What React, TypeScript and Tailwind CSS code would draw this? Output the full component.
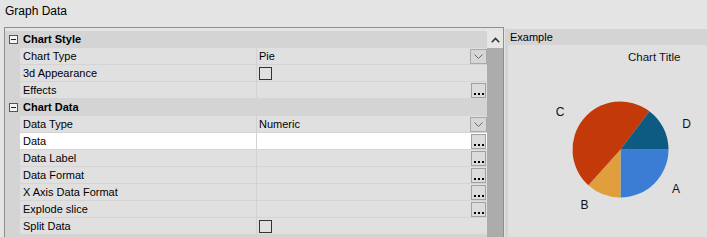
import React from 'react';

type Row = {
  label: string;
  cat?: boolean;
  value?: string;
  kind?: 'dropdown' | 'check' | 'ellipsis';
  selected?: boolean;
};

const rows: Row[] = [
  { label: 'Chart Style', cat: true },
  { label: 'Chart Type', value: 'Pie', kind: 'dropdown' },
  { label: '3d Appearance', kind: 'check' },
  { label: 'Effects', kind: 'ellipsis' },
  { label: 'Chart Data', cat: true },
  { label: 'Data Type', value: 'Numeric', kind: 'dropdown' },
  { label: 'Data', kind: 'ellipsis', selected: true },
  { label: 'Data Label', kind: 'ellipsis' },
  { label: 'Data Format', kind: 'ellipsis' },
  { label: 'X Axis Data Format', kind: 'ellipsis' },
  { label: 'Explode slice', kind: 'ellipsis' },
  { label: 'Split Data', kind: 'check' },
];

const slices = [
  { name: 'A', from: 0, to: 90, color: '#3b7dd5' },
  { name: 'B', from: 90, to: 132, color: '#e09e3c' },
  { name: 'C', from: 132, to: 307, color: '#c3390a' },
  { name: 'D', from: 307, to: 360, color: '#0d5a82' },
];

const cx = 112.5;
const cy = 104.5;
const r = 48;

const arc = (from: number, to: number) => {
  const a1 = (from * Math.PI) / 180;
  const a2 = (to * Math.PI) / 180;
  const x1 = cx + r * Math.cos(a1);
  const y1 = cy + r * Math.sin(a1);
  const x2 = cx + r * Math.cos(a2);
  const y2 = cy + r * Math.sin(a2);
  const large = to - from > 180 ? 1 : 0;
  return `M${cx} ${cy} L${x1} ${y1} A${r} ${r} 0 ${large} 1 ${x2} ${y2} Z`;
};

const Minus = () => (
  <div className="w-[9px] h-[9px] border border-[#555] bg-[#f2f2f2] flex items-center justify-center">
    <div className="w-[5px] h-[1px] bg-[#222]" />
  </div>
);

const DropButton = () => (
  <div className="w-[17px] h-[15px] border border-[#a9a9a9] bg-[#d6d6d6] flex items-center justify-center">
    <svg width="9" height="5" viewBox="0 0 9 5">
      <path d="M0.5 0.5 L4.5 4.5 L8.5 0.5" fill="none" stroke="#6a6a6a" strokeWidth="1" />
    </svg>
  </div>
);

const EllipsisButton = () => (
  <div className="w-[15px] h-[15px] mr-[1px] border-[1.5px] border-[#a0a0a0] bg-[#dcdcdc] flex items-end justify-center gap-[2px] pb-[2px]">
    <div className="w-[2px] h-[2px] bg-black" />
    <div className="w-[2px] h-[2px] bg-black" />
    <div className="w-[2px] h-[2px] bg-black" />
  </div>
);

const PropRow = ({ row }: { row: Row }) => {
  if (row.cat) {
    return (
      <div className="flex h-[17px] bg-[#d4d4d4]">
        <div className="w-[15px] flex items-center justify-center pl-[1px]">
          <Minus />
        </div>
        <div className="pl-[3px] pt-[1px] font-bold text-[11px] text-black leading-[15px]">{row.label}</div>
      </div>
    );
  }
  const bg = row.selected ? 'bg-white' : 'bg-[#e0e0e0]';
  return (
    <div className="flex h-[17px]">
      <div className="w-[15px] bg-[#d4d4d4]" />
      <div className={`flex flex-1 border-b border-[#d4d4d4] ${bg}`}>
        <div className="w-[237px] border-r border-[#d2d2d2] pl-[3px] text-[11px] leading-[16px] text-black">
          {row.label}
        </div>
        <div className="flex flex-1 items-center justify-between">
          <div className="pl-[2px] text-[11px] leading-[16px] text-black">
            {row.kind === 'check' ? (
              <div className="w-[13px] h-[13px] border border-[#333] mt-[1px]" />
            ) : (
              row.value
            )}
          </div>
          {row.kind === 'dropdown' && <DropButton />}
          {row.kind === 'ellipsis' && <EllipsisButton />}
        </div>
      </div>
    </div>
  );
};

export default function App() {
  return (
    <div
      className="w-[707px] h-[237px] bg-[#e4e4e4] overflow-hidden flex flex-col"
      style={{ fontFamily: '"Liberation Sans", Arial, sans-serif' }}
    >
      {/* Title */}
      <div className="h-[27px] pl-[5px] pt-[4px] text-[12px] leading-[14px] text-black">Graph Data</div>

      <div className="flex flex-1 min-h-0">
        {/* Property grid */}
        <div className="ml-[4px] w-[500px] border border-[#8e8e8e] border-b-0 pt-[3px] flex">
          <div className="flex-1 flex flex-col bg-[#d4d4d4]">
            {rows.map((row) => (
              <PropRow key={row.label} row={row} />
            ))}
          </div>
          {/* Scrollbar */}
          <div className="w-[16px] flex flex-col">
            <div className="h-[17px] bg-[#e6e6e6] flex items-center justify-center">
              <svg width="9" height="6" viewBox="0 0 9 6">
                <path d="M0.8 5.2 L4.5 1.5 L8.2 5.2" fill="none" stroke="#333" strokeWidth="1.6" />
              </svg>
            </div>
            <div className="flex-1 bg-[#acacac]" />
          </div>
        </div>

        {/* Example panel */}
        <div className="flex-1 ml-[1px] mt-[2px] flex flex-col">
          <div className="h-[17px] bg-[#d4d4d4] pl-[5px] text-[11px] leading-[16px] text-black">Example</div>
          <div className="flex-1 bg-[#e0e0e0] border-l-[3px] border-[#d4d4d4]">
            <svg width="199" height="192" viewBox="0 0 199 192">
              <text x="120" y="16" fontSize="11.5" fill="#111" fontFamily='"Liberation Sans", Arial, sans-serif'>
                Chart Title
              </text>
              {slices.map((s) => (
                <path key={s.name} d={arc(s.from, s.to)} fill={s.color} />
              ))}
              <g fontSize="12" fill="#111" textAnchor="middle" fontFamily='"Liberation Sans", Arial, sans-serif'>
                <text x="52" y="71">C</text>
                <text x="178.5" y="82.5">D</text>
                <text x="168" y="147.5">A</text>
                <text x="76.5" y="163.5">B</text>
              </g>
            </svg>
          </div>
        </div>
      </div>
    </div>
  );
}
